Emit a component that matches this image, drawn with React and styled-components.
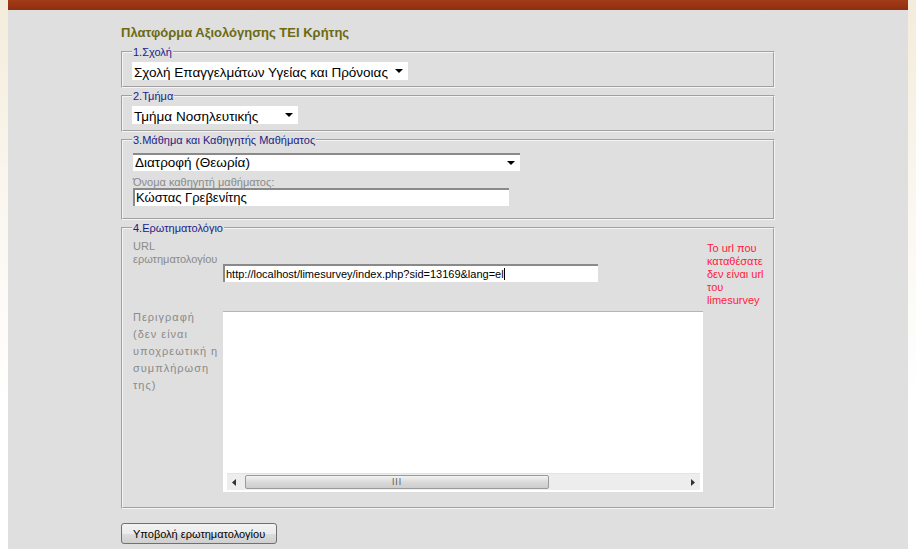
import React from "react";
import styled, { createGlobalStyle } from "styled-components";

const GlobalStyle = createGlobalStyle`
  html, body {
    margin: 0;
    padding: 0;
  }
  body {
    background: linear-gradient(to bottom, #f4ecda 0%, #faf6ee 180px, #ffffff 400px);
    font-family: "Liberation Sans", Arial, sans-serif;
  }
`;

const Page = styled.div`
  margin: 0 8px;
  min-height: 549px;
  background: #dfdfdf;
`;

const TopBar = styled.div`
  height: 10px;
  background: linear-gradient(to bottom, #a33c18, #8e2e0f);
`;

const Content = styled.div`
  padding: 16px 0 0 113px;
  width: 654px;
`;

const Title = styled.h1`
  margin: 0 0 6px;
  font-size: 13px;
  line-height: 14px;
  font-weight: bold;
  color: #6c6a12;
`;

const Fieldset = styled.fieldset`
  margin: 0 0 2px;
  padding: 0 10px ${(p) => p.$bottom || 6}px;
  border: 2px groove #f4f4f4;
  min-width: 0;
`;

const Legend = styled.legend`
  padding: 0 1px;
  margin-left: -1px;
  font-size: 11px;
  line-height: 12px;
  color: #1c1c86;
`;

const SelectBox = styled.div`
  display: flex;
  align-items: center;
  width: ${(p) => p.$width}px;
  height: 18px;
  margin: ${(p) => p.$top || 4}px 0 0 ${(p) => p.$left || 0}px;
  background: #fff;
  box-sizing: border-box;
  border-top: ${(p) => (p.$inset ? "2px solid #8a8a8a" : "none")};
  overflow: hidden;
`;

const SelectText = styled.span`
  flex: 1;
  padding-left: 2px;
  font-size: 13.5px;
  line-height: 18px;
  color: #000;
  white-space: nowrap;
  overflow: hidden;
  margin-top: ${(p) => (p.$inset ? "0" : "3px")};
`;

const Arrow = styled.svg`
  width: 8px;
  height: 4px;
  margin: 0 5px 0 6px;
  flex: none;
`;

const SmallLabel = styled.div`
  margin-top: 5px;
  font-size: 11px;
  line-height: 12px;
  color: #8a8a8a;
`;

const TextInput = styled.div`
  width: ${(p) => p.$width}px;
  height: 18px;
  box-sizing: border-box;
  background: #fff;
  border-top: 2px solid #8a8a8a;
  border-left: 2px solid #8a8a8a;
  padding-left: 1px;
  font-size: ${(p) => p.$size || 13}px;
  line-height: 16px;
  color: #000;
  white-space: nowrap;
  overflow: hidden;
`;

const Caret = styled.span`
  display: inline-block;
  width: 1px;
  height: 12px;
  background: #000;
  vertical-align: -2px;
`;

const FormGrid = styled.div`
  display: grid;
  grid-template-columns: 90px 484px 62px;
  grid-template-rows: 71px 181px;
  margin-top: 6px;
`;

const CellLabel = styled.div`
  font-size: 11px;
  line-height: ${(p) => (p.$spaced ? 17 : 13)}px;
  letter-spacing: ${(p) => (p.$spaced ? "1px" : "0")};
  color: #8a8a8a;
  margin-top: ${(p) => p.$top || 0}px;
`;

const CellMiddle = styled.div`
  display: flex;
  align-items: center;
  padding-bottom: 6px;
`;

const ErrorText = styled.div`
  font-size: 11px;
  line-height: 13px;
  color: #ff1a3c;
  padding-top: 2px;
`;

const TextArea = styled.div`
  width: 480px;
  height: 181px;
  box-sizing: border-box;
  background: #fff;
  border-top: 1px solid #b5b5b5;
  display: flex;
  flex-direction: column;
  justify-content: flex-end;
  padding: 0 3px 2px 4px;
`;

const ScrollBar = styled.div`
  display: flex;
  align-items: center;
  height: 16px;
  background: #ededed;
  border-top: 1px solid #e4e4e4;
`;

const ScrollArrow = styled.div`
  width: 14px;
  display: flex;
  justify-content: center;
  align-items: center;
  flex: none;
`;

const Track = styled.div`
  flex: 1;
  height: 100%;
  display: flex;
  align-items: center;
`;

const Thumb = styled.div`
  margin-left: 4px;
  width: 304px;
  height: 14px;
  box-sizing: border-box;
  border: 1px solid #9a9a9a;
  border-radius: 2px;
  background: linear-gradient(to bottom, #f4f4f4, #dadada 50%, #cdcdcd);
  display: flex;
  align-items: center;
  justify-content: center;
  font-size: 8px;
  letter-spacing: 1px;
  color: #555;
  font-family: "DejaVu Sans", sans-serif;
`;

const Button = styled.button`
  margin-top: 12px;
  height: 21px;
  padding: 0 11px;
  border: 1px solid #707070;
  border-radius: 3px;
  background: linear-gradient(to bottom, #f3f3f3 0%, #ebebeb 50%, #dddddd 51%, #cfcfcf 100%);
  font-family: "Liberation Sans", Arial, sans-serif;
  font-size: 11px;
  color: #000;
`;

const DownArrow = () => (
  <Arrow viewBox="0 0 8 4">
    <path d="M0 0h8L4 4z" fill="#000" />
  </Arrow>
);

const Select = ({ width, top, left, inset, children }) => (
  <SelectBox $width={width} $top={top} $left={left} $inset={inset}>
    <SelectText $inset={inset}>{children}</SelectText>
    <DownArrow />
  </SelectBox>
);

const App = () => (
  <>
    <GlobalStyle />
    <Page>
      <TopBar />
      <Content>
        <Title>Πλατφόρμα Αξιολόγησης ΤΕΙ Κρήτης</Title>

        <Fieldset>
          <Legend>1.Σχολή</Legend>
          <Select width={276} left={-1}>
            Σχολή Επαγγελμάτων Υγείας και Πρόνοιας
          </Select>
        </Fieldset>

        <Fieldset>
          <Legend>2.Τμήμα</Legend>
          <Select width={166} left={-1}>
            Τμήμα Νοσηλευτικής
          </Select>
        </Fieldset>

        <Fieldset $bottom={12}>
          <Legend>3.Μάθημα και Καθηγητής Μαθήματος</Legend>
          <Select width={387} top={7} left={0} inset>
            Διατροφή (Θεωρία)
          </Select>
          <SmallLabel>Όνομα καθηγητή μαθήματος:</SmallLabel>
          <TextInput $width={376}>Κώστας Γρεβενίτης</TextInput>
        </Fieldset>

        <Fieldset $bottom={15}>
          <Legend>4.Ερωτηματολόγιο</Legend>
          <FormGrid>
            <CellLabel>
              URL
              <br />
              ερωτηματολογίου
            </CellLabel>
            <CellMiddle>
              <TextInput $width={375} $size={11}>
                http://localhost/limesurvey/index.php?sid=13169&amp;lang=el
                <Caret />
              </TextInput>
            </CellMiddle>
            <ErrorText>Το url που καταθέσατε δεν είναι url του limesurvey</ErrorText>

            <CellLabel $spaced $top={-2}>
              Περιγραφή (δεν είναι υποχρεωτική η συμπλήρωση της)
            </CellLabel>
            <div>
              <TextArea>
                <ScrollBar>
                  <ScrollArrow>
                    <svg width="4" height="7" viewBox="0 0 4 7">
                      <path d="M4 0v7L0 3.5z" fill="#333" />
                    </svg>
                  </ScrollArrow>
                  <Track>
                    <Thumb>III</Thumb>
                  </Track>
                  <ScrollArrow>
                    <svg width="4" height="7" viewBox="0 0 4 7">
                      <path d="M0 0v7l4-3.5z" fill="#333" />
                    </svg>
                  </ScrollArrow>
                </ScrollBar>
              </TextArea>
            </div>
            <div />
          </FormGrid>
        </Fieldset>

        <Button>Υποβολή ερωτηματολογίου</Button>
      </Content>
    </Page>
  </>
);

export default App;
